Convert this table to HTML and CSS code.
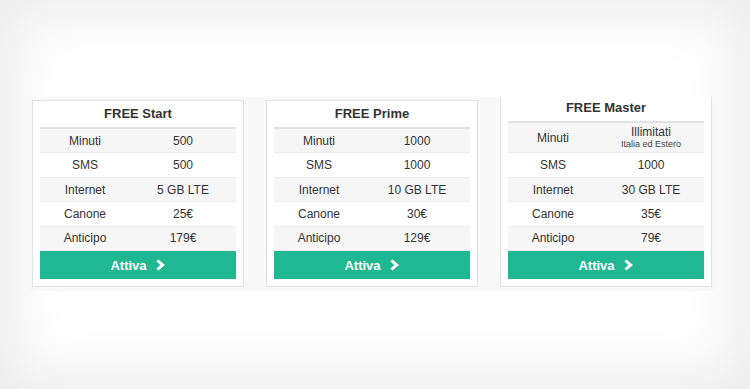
FILE: index.html
```html
<!DOCTYPE html>
<html lang="it">
<head>
<meta charset="utf-8">
<title>Offerte FREE</title>
<link rel="stylesheet" href="styles.css">
</head>
<body>
<div class="page">
  <div class="panel">
    <div class="card">
      <div class="title">FREE Start</div>
      <div class="row odd"><span class="lab">Minuti</span><span class="val">500</span></div>
      <div class="row"><span class="lab">SMS</span><span class="val">500</span></div>
      <div class="row odd"><span class="lab">Internet</span><span class="val">5 GB LTE</span></div>
      <div class="row"><span class="lab">Canone</span><span class="val">25€</span></div>
      <div class="row odd"><span class="lab">Anticipo</span><span class="val">179€</span></div>
      <a class="btn" href="#">Attiva <svg class="chev" viewBox="0 0 10 12" width="10" height="12"><path d="M2.4 0.4 L9 6 L2.4 11.6 L0.4 9.4 L4.4 6 L0.4 2.6 Z" fill="#fff"/></svg></a>
    </div>
    <div class="card">
      <div class="title">FREE Prime</div>
      <div class="row odd"><span class="lab">Minuti</span><span class="val">1000</span></div>
      <div class="row"><span class="lab">SMS</span><span class="val">1000</span></div>
      <div class="row odd"><span class="lab">Internet</span><span class="val">10 GB LTE</span></div>
      <div class="row"><span class="lab">Canone</span><span class="val">30€</span></div>
      <div class="row odd"><span class="lab">Anticipo</span><span class="val">129€</span></div>
      <a class="btn" href="#">Attiva <svg class="chev" viewBox="0 0 10 12" width="10" height="12"><path d="M2.4 0.4 L9 6 L2.4 11.6 L0.4 9.4 L4.4 6 L0.4 2.6 Z" fill="#fff"/></svg></a>
    </div>
    <div class="card">
      <div class="title">FREE Master</div>
      <div class="row odd tall"><span class="lab">Minuti</span><span class="val">Illimitati<small>Italia ed Estero</small></span></div>
      <div class="row"><span class="lab">SMS</span><span class="val">1000</span></div>
      <div class="row odd"><span class="lab">Internet</span><span class="val">30 GB LTE</span></div>
      <div class="row"><span class="lab">Canone</span><span class="val">35€</span></div>
      <div class="row odd"><span class="lab">Anticipo</span><span class="val">79€</span></div>
      <a class="btn" href="#">Attiva <svg class="chev" viewBox="0 0 10 12" width="10" height="12"><path d="M2.4 0.4 L9 6 L2.4 11.6 L0.4 9.4 L4.4 6 L0.4 2.6 Z" fill="#fff"/></svg></a>
    </div>
  </div>
</div>
</body>
</html>
```

FILE: styles.css
```css
html, body {
  margin: 0;
  padding: 0;
  background: #fff;
}
.page {
  width: 750px;
  height: 389px;
  box-sizing: border-box;
  padding-top: 97px;
  padding-left: 28px;
  box-shadow: inset 0 0 55px 14px rgba(0, 0, 0, 0.08);
  font-family: "Liberation Sans", Arial, sans-serif;
  color: #333;
  overflow: hidden;
}
.panel {
  width: 688px;
  height: 194px;
  box-sizing: border-box;
  padding: 0 4px 4px 4px;
  background: #f8f8f8;
  display: flex;
  align-items: flex-end;
  gap: 22px;
  overflow: hidden;
}
.card {
  width: 212px;
  box-sizing: border-box;
  background: #fff;
  border: 1px solid #e2e2e2;
  padding: 0 7px 7px 7px;
  display: flex;
  flex-direction: column;
}
.title {
  height: 26px;
  line-height: 26px;
  text-align: center;
  font-weight: bold;
  font-size: 13px;
  color: #333;
  border-bottom: 2px solid #e2e2e2;
}
.row {
  display: flex;
  align-items: center;
  height: 23.4px;
  border-bottom: 1px solid #ececec;
  font-size: 12px;
  background: #fff;
}
.row.odd {
  background: #f6f6f6;
}
.row.tall {
  height: 29.4px;
}
.lab {
  width: 90px;
  text-align: center;
}
.val {
  flex: 1;
  text-align: center;
  display: flex;
  flex-direction: column;
  align-items: center;
  line-height: 14px;
}
.val small {
  font-size: 9px;
  line-height: 11px;
  color: #444;
}
.btn {
  display: flex;
  align-items: center;
  justify-content: center;
  gap: 9px;
  height: 28px;
  background: #1fb892;
  color: #fff;
  font-weight: bold;
  font-size: 13px;
  text-decoration: none;
}
.chev {
  display: block;
}
```
